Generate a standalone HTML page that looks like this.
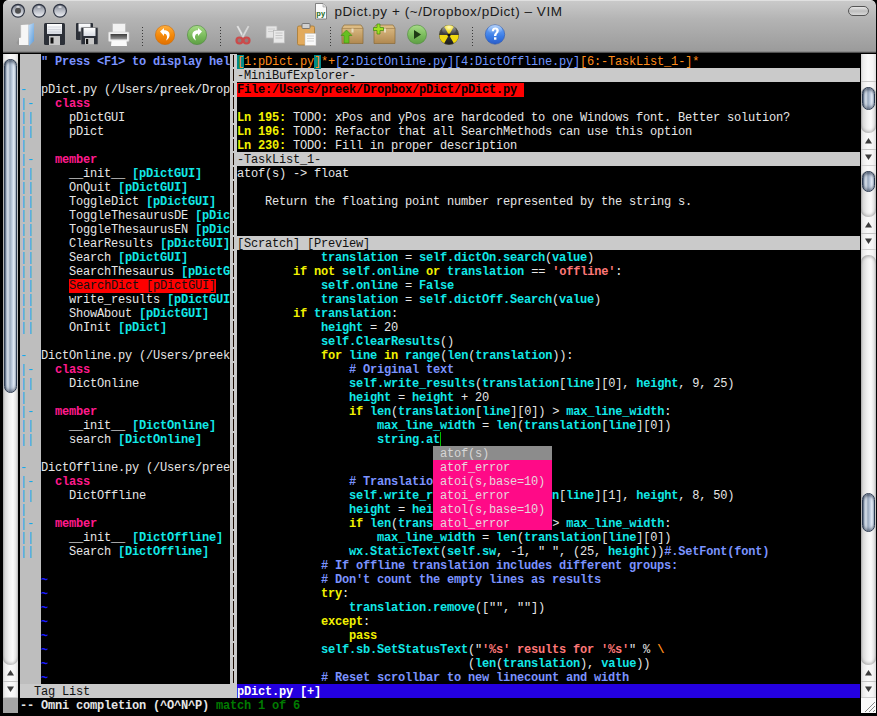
<!DOCTYPE html>
<html><head><meta charset="utf-8">
<style>
*{margin:0;padding:0;box-sizing:border-box}
html,body{width:877px;height:716px;overflow:hidden;background:#000}
#win{position:absolute;left:3px;top:0;width:873px;height:713px;background:#000;border-radius:5px 5px 0 0;overflow:hidden}
#tb{position:absolute;left:0;top:0;width:873px;height:53px;background:linear-gradient(#e0e0e0 0,#e0e0e0 1px,#c9c9c9 1.5px,#b3b3b3 20px,#9b9b9b 51px,#767676 52px,#2a2a2a 53px);border-radius:5px 5px 0 0}
.title{position:absolute;left:331.5px;top:4px;font:13.5px "Liberation Sans",sans-serif;color:#1a1a1a;white-space:pre;letter-spacing:0.55px}
.row{position:absolute;height:14px;line-height:14px;padding-top:1px;font-family:"Liberation Mono",monospace;font-size:12px;letter-spacing:-0.2px;white-space:pre;color:#e6e6e6}
.fold{color:#10a8f0}
.n{color:#e6e6e6}.cm{color:#7b93ff}.id{color:#12e8e8}.kw{color:#f2f200}.st{color:#ff7878}.pk{color:#ff1a8c}.tl{color:#1a1aff}.or{color:#ff8c1a}.bl{color:#7096ff}.gr{color:#007a00}
.sel{background:#ff0000;color:#101010}
.tab{background:#008b8b;color:#ff8c1a}
.file{background:#ff0000;color:#000;font-weight:bold}
.blk{position:absolute}
.stl{position:absolute;height:14px;background:#cacaca}
.sb{position:absolute;width:15px;background:linear-gradient(90deg,#b4b4b4 0,#dedede 1px,#f2f2f2 3px,#ffffff 7px,#f6f6f6 11px,#e2e2e2 14px,#c8c8c8 15px)}
.thumb{position:absolute;width:13px;border-radius:6.5px;border:1px solid #2e3c52;background:linear-gradient(90deg,#4e5e76 0,#a6b4c6 1px,#d8e0ea 3px,#98a8bc 5px,#bccade 7px,#e6eef8 9px,#b4c2d4 11px,#5a6a82 13px);box-shadow:inset 0 3px 3px -1px rgba(30,40,60,.6),inset 0 -3px 3px -1px rgba(30,40,60,.45)}
.arr{position:absolute;left:0;width:15px;height:16px}
.arr:after{content:"";position:absolute;left:3px;border-left:4.5px solid transparent;border-right:4.5px solid transparent}
.up:after{top:5px;border-bottom:6px solid #404040}
.dn:after{top:5px;border-top:6px solid #404040}
.cap{position:absolute;width:15px;border-radius:0 0 7.5px 7.5px;background:linear-gradient(90deg,#c0c0c0,#eeeeee 40%,#f4f4f4 60%,#cccccc);box-shadow:0 1px 1px rgba(0,0,0,.25)}
.capt{position:absolute;width:15px;border-radius:7.5px 7.5px 0 0;background:linear-gradient(90deg,#c0c0c0,#eeeeee 40%,#f4f4f4 60%,#cccccc);box-shadow:0 -1px 1px rgba(0,0,0,.2)}
</style></head><body>
<div id="win">
<div id="tb">
  <!-- traffic lights -->
  <svg width="80" height="22" style="position:absolute;left:5px;top:0">
    <defs>
      <linearGradient id="tl" x1="0" y1="0" x2="0" y2="1"><stop offset="0" stop-color="#6e7482"/><stop offset="0.35" stop-color="#a8acb6"/><stop offset="0.75" stop-color="#d6d9e0"/><stop offset="1" stop-color="#eceef2"/></linearGradient>
      <radialGradient id="hl" cx="50%" cy="50%" r="50%"><stop offset="0" stop-color="#ffffff" stop-opacity="1"/><stop offset="1" stop-color="#ffffff" stop-opacity="0"/></radialGradient>
    </defs>
    <g stroke="#2e3442" stroke-width="1.2">
    <circle cx="10" cy="10.8" r="6.4" fill="url(#tl)"/>
    <circle cx="31" cy="10.8" r="6.4" fill="url(#tl)"/>
    <circle cx="52" cy="10.8" r="6.4" fill="url(#tl)"/>
    </g>
    <ellipse cx="10" cy="7" rx="2.5" ry="1.6" fill="url(#hl)"/>
    <ellipse cx="31" cy="7" rx="2.5" ry="1.6" fill="url(#hl)"/>
    <ellipse cx="52" cy="7" rx="2.5" ry="1.6" fill="url(#hl)"/>
    <circle cx="10" cy="10.8" r="3" fill="#505050"/>
  </svg>
  <!-- title -->
  <svg width="16" height="18" style="position:absolute;left:309px;top:2px">
    <path d="M3.5 1.5 H11 L14.5 5 V17 H3.5 Z" fill="#fbfbfb" stroke="#777" stroke-width="0.9"/>
    <path d="M11 1.5 V5 H14.5" fill="#ddd" stroke="#999" stroke-width="0.6"/>
    <text x="4.3" y="14.2" font-family="Liberation Sans" font-weight="bold" font-size="7.5" fill="#1a6a1a">py</text>
  </svg>
  <div class="title">pDict.py + (~/Dropbox/pDict) – VIM</div>
  <div style="position:absolute;left:845px;top:6px;width:21px;height:10px;border-radius:5px;border:1px solid #555;background:linear-gradient(#e8e8e8,#bdbdbd 50%,#d8d8d8)"></div>
</div>
</div>
<svg width="877" height="53" style="position:absolute;left:0;top:0">
<defs>
<linearGradient id="gOr" x1="0" y1="0" x2="0" y2="1"><stop offset="0" stop-color="#ffb040"/><stop offset="0.5" stop-color="#f58a0a"/><stop offset="1" stop-color="#e07000"/></linearGradient>
<linearGradient id="gGr" x1="0" y1="0" x2="0" y2="1"><stop offset="0" stop-color="#a8dc88"/><stop offset="0.6" stop-color="#76b858"/><stop offset="1" stop-color="#5e9e44"/></linearGradient>
<linearGradient id="gBl" x1="0" y1="0" x2="0" y2="1"><stop offset="0" stop-color="#7ab0f8"/><stop offset="0.6" stop-color="#3a7ce6"/><stop offset="1" stop-color="#2a5cc8"/></linearGradient>
<linearGradient id="gBox" x1="0" y1="0" x2="0" y2="1"><stop offset="0" stop-color="#e0c088"/><stop offset="1" stop-color="#b08850"/></linearGradient>
<linearGradient id="gFl" x1="0" y1="0" x2="1" y2="1"><stop offset="0" stop-color="#c8e0f8"/><stop offset="1" stop-color="#5a9ad8"/></linearGradient>
<linearGradient id="gLbl" x1="0" y1="0" x2="0" y2="1"><stop offset="0" stop-color="#ffffff"/><stop offset="1" stop-color="#d8dce4"/></linearGradient>
</defs>
<!-- open -->
<path d="M21 25 L28.5 24.5 L28.5 45 L19 45 L19 38 L21 37.5 Z" fill="#f6f6f6"/><path d="M19 38 L16.5 43 L19 45 Z" fill="#8a8a8a" opacity="0.5"/>
<path d="M28.5 25 L34 23 L34 41 L29 46 Z" fill="url(#gFl)"/><path d="M21 25 L21 37.5" stroke="#e0e0e0" stroke-width="0.6"/>
<!-- save -->
<rect x="44" y="23" width="21" height="22" rx="1.5" fill="#2c3038"/>
<rect x="47" y="24" width="15" height="10" fill="url(#gLbl)"/><g stroke="#c4c8d0" stroke-width="0.6"><line x1="48" y1="27" x2="61" y2="27"/><line x1="48" y1="29.5" x2="61" y2="29.5"/><line x1="48" y1="32" x2="61" y2="32"/></g>
<rect x="49" y="36" width="11" height="9" fill="#c8c8c8"/>
<rect x="50.5" y="37.5" width="3" height="6" fill="#111"/>
<!-- save all -->
<rect x="76" y="23" width="17" height="17" rx="1" fill="#2c3038"/>
<rect x="78.5" y="23.5" width="12" height="8" fill="url(#gLbl)"/>
<rect x="81" y="27.5" width="17" height="17" rx="1" fill="#2c3038" stroke="#9a9a9a" stroke-width="0.6"/>
<rect x="83.5" y="28" width="12" height="8" fill="url(#gLbl)"/>
<rect x="85" y="38" width="9" height="6.5" fill="#c8c8c8"/>
<rect x="86" y="39" width="2.2" height="5" fill="#111"/>
<!-- print -->
<rect x="112.5" y="23.5" width="13" height="9" fill="#f2f2f2" stroke="#bbb" stroke-width="0.7"/>
<rect x="108.5" y="32" width="20.5" height="9.5" rx="1" fill="#f0f0f0" stroke="#ccc" stroke-width="0.6"/>
<defs><linearGradient id="gSl" x1="0" y1="0" x2="0" y2="1"><stop offset="0" stop-color="#3a3a3a"/><stop offset="1" stop-color="#9a9a9a"/></linearGradient></defs><rect x="110.5" y="34" width="16.5" height="5.5" fill="url(#gSl)"/>
<path d="M111.5 41 L126.5 41 L127 46 L111 46 Z" fill="#fafafa"/>
<!-- separators -->
<g fill="#3a3a3a"><rect x="142" y="27" width="1" height="1"/><rect x="142" y="30" width="1" height="1"/><rect x="142" y="33" width="1" height="1"/><rect x="142" y="36" width="1" height="1"/><rect x="142" y="39" width="1" height="1"/><rect x="142" y="42" width="1" height="1"/><rect x="142" y="45" width="1" height="1"/><rect x="220" y="27" width="1" height="1"/><rect x="220" y="30" width="1" height="1"/><rect x="220" y="33" width="1" height="1"/><rect x="220" y="36" width="1" height="1"/><rect x="220" y="39" width="1" height="1"/><rect x="220" y="42" width="1" height="1"/><rect x="220" y="45" width="1" height="1"/><rect x="330" y="27" width="1" height="1"/><rect x="330" y="30" width="1" height="1"/><rect x="330" y="33" width="1" height="1"/><rect x="330" y="36" width="1" height="1"/><rect x="330" y="39" width="1" height="1"/><rect x="330" y="42" width="1" height="1"/><rect x="330" y="45" width="1" height="1"/><rect x="472" y="27" width="1" height="1"/><rect x="472" y="30" width="1" height="1"/><rect x="472" y="33" width="1" height="1"/><rect x="472" y="36" width="1" height="1"/><rect x="472" y="39" width="1" height="1"/><rect x="472" y="42" width="1" height="1"/><rect x="472" y="45" width="1" height="1"/></g>
<!-- undo -->
<circle cx="165" cy="35" r="9.6" fill="url(#gOr)" stroke="#d06a00" stroke-width="0.6"/>
<path d="M160 31.5 L164 28 L164 30.3 C168.5 30.3 170 33 169.5 36 C169 38.5 167 40 166 40.5 C167 38.5 167.5 36.5 166.5 35 C165.8 34 165 33.8 164 33.8 L164 36 Z" fill="#fff"/>
<!-- redo -->
<circle cx="197" cy="35" r="9.6" fill="url(#gGr)" stroke="#4a8a38" stroke-width="0.6"/>
<path d="M202 31.5 L198 28 L198 30.3 C193.5 30.3 192 33 192.5 36 C193 38.5 195 40 196 40.5 C195 38.5 194.5 36.5 195.5 35 C196.2 34 197 33.8 198 33.8 L198 36 Z" fill="#fff"/>
<!-- cut -->
<path d="M236 26 L238.5 25.5 L244.5 36.5 L242.5 38 Z" fill="#e2e2e2" stroke="#a0a0a0" stroke-width="0.5"/>
<path d="M250 26 L247.5 25.5 L241.5 36.5 L243.5 38 Z" fill="#d6d6d6" stroke="#a0a0a0" stroke-width="0.5"/>
<circle cx="239.5" cy="40.5" r="3" fill="#7a2a2a" fill-opacity="0.35" stroke="#cc4a4a" stroke-width="2.2"/>
<circle cx="246.5" cy="40.5" r="3" fill="#7a2a2a" fill-opacity="0.35" stroke="#cc4a4a" stroke-width="2.2"/>
<!-- copy -->
<rect x="266" y="26" width="11" height="12" fill="#e4e4e4" stroke="#b8b8b8" stroke-width="0.8"/><g stroke="#c4c4c4" stroke-width="0.8"><line x1="268" y1="29" x2="275" y2="29"/><line x1="268" y1="31.5" x2="275" y2="31.5"/></g>
<rect x="273.5" y="30.5" width="11" height="12.5" fill="#e8e8e8" stroke="#b8b8b8" stroke-width="0.8"/>
<g stroke="#bdbdbd" stroke-width="0.8"><line x1="275.5" y1="33" x2="282.5" y2="33"/><line x1="275.5" y1="35.5" x2="282.5" y2="35.5"/><line x1="275.5" y1="38" x2="282.5" y2="38"/></g>
<!-- paste -->
<rect x="297.5" y="26" width="17" height="19" rx="1.5" fill="#e2aa5c" stroke="#a87830" stroke-width="0.8"/>
<rect x="302" y="23.5" width="8" height="5" rx="1" fill="#d0d0d0" stroke="#666" stroke-width="0.8"/>
<rect x="305" y="33.5" width="11" height="12" fill="#fafafa" stroke="#bbb" stroke-width="0.5"/>
<g stroke="#ccc" stroke-width="0.8"><line x1="307" y1="36" x2="314" y2="36"/><line x1="307" y1="38.5" x2="314" y2="38.5"/><line x1="307" y1="41" x2="314" y2="41"/></g>
<!-- load session box -->
<path d="M342 28 L344 25 L361 25 L363 28 L363 43.5 L342 43.5 Z" fill="url(#gBox)" stroke="#8a6a38" stroke-width="0.7"/>
<line x1="342" y1="28.5" x2="363" y2="28.5" stroke="#9a7a48" stroke-width="0.6"/>
<rect x="351.5" y="28.5" width="2" height="4" fill="#e8dcc0"/>
<path d="M346.5 30 L352 35.5 L349 35.5 L349 43 L344 43 L344 35.5 L341 35.5 Z" fill="#66c020" stroke="#3a8a10" stroke-width="0.6"/>
<!-- new session -->
<path d="M374 28 L376 25 L393 25 L395 28 L395 43.5 L374 43.5 Z" fill="url(#gBox)" stroke="#8a6a38" stroke-width="0.7"/>
<line x1="374" y1="28.5" x2="395" y2="28.5" stroke="#9a7a48" stroke-width="0.6"/>
<rect x="384" y="28.5" width="2" height="4" fill="#e8dcc0"/>
<path d="M377 24 L380 24 L380 27.5 L383.5 27.5 L383.5 30.5 L380 30.5 L380 34 L377 34 L377 30.5 L373.5 30.5 L373.5 27.5 L377 27.5 Z" fill="#a0e020" stroke="#3a8a10" stroke-width="0.7"/>
<!-- run -->
<circle cx="417" cy="34.5" r="9.5" fill="url(#gGr)" stroke="#4a8a38" stroke-width="0.6"/>
<path d="M414 30 L421 34.5 L414 39 Z" fill="#1e3a14"/>
<!-- radiation -->
<defs>
<radialGradient id="gRad" cx="50%" cy="20%" r="80%"><stop offset="0" stop-color="#fff8a0"/><stop offset="0.45" stop-color="#f2dc10"/><stop offset="1" stop-color="#e8c800"/></radialGradient>
<linearGradient id="gBlk" x1="0" y1="0" x2="0" y2="1"><stop offset="0" stop-color="#5a5a5a"/><stop offset="1" stop-color="#1a1a1a"/></linearGradient>
<linearGradient id="gGloss" x1="0" y1="0" x2="0" y2="1"><stop offset="0" stop-color="#fff" stop-opacity="0.45"/><stop offset="1" stop-color="#fff" stop-opacity="0"/></linearGradient>
</defs>
<circle cx="449" cy="35" r="9.6" fill="url(#gBlk)" stroke="#3a3a20" stroke-width="0.7"/>
<path d="M449 35 L444.2 26.7 A9.6 9.6 0 0 1 453.8 26.7 Z" fill="url(#gRad)"/>
<path d="M449 35 L458.6 35 A9.6 9.6 0 0 1 453.8 43.3 Z" fill="#f0d810"/>
<path d="M449 35 L444.2 43.3 A9.6 9.6 0 0 1 439.4 35 Z" fill="#f0d810"/>
<circle cx="449" cy="35" r="1.6" fill="#111"/>
<ellipse cx="449" cy="30" rx="7" ry="4.5" fill="url(#gGloss)"/>
<!-- help -->
<circle cx="495" cy="34.5" r="9.7" fill="url(#gBl)" stroke="#2a58b0" stroke-width="0.6"/>
<ellipse cx="495" cy="29.5" rx="7" ry="4.5" fill="url(#gGloss)"/>
<path d="M491.8 31.2 C491.8 28.6 493.5 27.6 495.3 27.6 C497.3 27.6 498.8 28.8 498.8 30.8 C498.8 33.2 496.3 33.6 496.3 36 L494 36 C494 32.8 496.4 32.4 496.4 30.9 C496.4 30 495.9 29.5 495.2 29.5 C494.4 29.5 494 30.1 494 31.2 Z" fill="#fff"/>
<rect x="494" y="37.3" width="2.4" height="2.4" fill="#fff"/>
</svg>

<div class="blk" style="left:20px;top:54px;width:21px;height:630px;background:#bebebe"></div>
<div class="blk" style="left:230px;top:54px;width:7px;height:630px;background:#cacaca"></div>
<div class="blk" style="left:233px;top:55px;width:1px;height:12px;background:#1a0a00"></div>
<div class="blk" style="left:233px;top:69px;width:1px;height:12px;background:#1a0a00"></div>
<div class="blk" style="left:233px;top:83px;width:1px;height:12px;background:#1a0a00"></div>
<div class="blk" style="left:233px;top:97px;width:1px;height:12px;background:#1a0a00"></div>
<div class="blk" style="left:233px;top:111px;width:1px;height:12px;background:#1a0a00"></div>
<div class="blk" style="left:233px;top:125px;width:1px;height:12px;background:#1a0a00"></div>
<div class="blk" style="left:233px;top:139px;width:1px;height:12px;background:#1a0a00"></div>
<div class="blk" style="left:233px;top:153px;width:1px;height:12px;background:#1a0a00"></div>
<div class="blk" style="left:233px;top:167px;width:1px;height:12px;background:#1a0a00"></div>
<div class="blk" style="left:233px;top:181px;width:1px;height:12px;background:#1a0a00"></div>
<div class="blk" style="left:233px;top:195px;width:1px;height:12px;background:#1a0a00"></div>
<div class="blk" style="left:233px;top:209px;width:1px;height:12px;background:#1a0a00"></div>
<div class="blk" style="left:233px;top:223px;width:1px;height:12px;background:#1a0a00"></div>
<div class="blk" style="left:233px;top:237px;width:1px;height:12px;background:#1a0a00"></div>
<div class="blk" style="left:233px;top:251px;width:1px;height:12px;background:#1a0a00"></div>
<div class="blk" style="left:233px;top:265px;width:1px;height:12px;background:#1a0a00"></div>
<div class="blk" style="left:233px;top:279px;width:1px;height:12px;background:#1a0a00"></div>
<div class="blk" style="left:233px;top:293px;width:1px;height:12px;background:#1a0a00"></div>
<div class="blk" style="left:233px;top:307px;width:1px;height:12px;background:#1a0a00"></div>
<div class="blk" style="left:233px;top:321px;width:1px;height:12px;background:#1a0a00"></div>
<div class="blk" style="left:233px;top:335px;width:1px;height:12px;background:#1a0a00"></div>
<div class="blk" style="left:233px;top:349px;width:1px;height:12px;background:#1a0a00"></div>
<div class="blk" style="left:233px;top:363px;width:1px;height:12px;background:#1a0a00"></div>
<div class="blk" style="left:233px;top:377px;width:1px;height:12px;background:#1a0a00"></div>
<div class="blk" style="left:233px;top:391px;width:1px;height:12px;background:#1a0a00"></div>
<div class="blk" style="left:233px;top:405px;width:1px;height:12px;background:#1a0a00"></div>
<div class="blk" style="left:233px;top:419px;width:1px;height:12px;background:#1a0a00"></div>
<div class="blk" style="left:233px;top:433px;width:1px;height:12px;background:#1a0a00"></div>
<div class="blk" style="left:233px;top:447px;width:1px;height:12px;background:#1a0a00"></div>
<div class="blk" style="left:233px;top:461px;width:1px;height:12px;background:#1a0a00"></div>
<div class="blk" style="left:233px;top:475px;width:1px;height:12px;background:#1a0a00"></div>
<div class="blk" style="left:233px;top:489px;width:1px;height:12px;background:#1a0a00"></div>
<div class="blk" style="left:233px;top:503px;width:1px;height:12px;background:#1a0a00"></div>
<div class="blk" style="left:233px;top:517px;width:1px;height:12px;background:#1a0a00"></div>
<div class="blk" style="left:233px;top:531px;width:1px;height:12px;background:#1a0a00"></div>
<div class="blk" style="left:233px;top:545px;width:1px;height:12px;background:#1a0a00"></div>
<div class="blk" style="left:233px;top:559px;width:1px;height:12px;background:#1a0a00"></div>
<div class="blk" style="left:233px;top:573px;width:1px;height:12px;background:#1a0a00"></div>
<div class="blk" style="left:233px;top:587px;width:1px;height:12px;background:#1a0a00"></div>
<div class="blk" style="left:233px;top:601px;width:1px;height:12px;background:#1a0a00"></div>
<div class="blk" style="left:233px;top:615px;width:1px;height:12px;background:#1a0a00"></div>
<div class="blk" style="left:233px;top:629px;width:1px;height:12px;background:#1a0a00"></div>
<div class="blk" style="left:233px;top:643px;width:1px;height:12px;background:#1a0a00"></div>
<div class="blk" style="left:233px;top:657px;width:1px;height:12px;background:#1a0a00"></div>
<div class="blk" style="left:233px;top:671px;width:1px;height:12px;background:#1a0a00"></div>
<div class="blk" style="left:20px;top:684px;width:217px;height:14px;background:#cacaca"></div>
<div class="blk" style="left:237px;top:68px;width:623px;height:14px;background:#cacaca"></div>
<div class="blk" style="left:237px;top:152px;width:623px;height:14px;background:#cacaca"></div>
<div class="blk" style="left:237px;top:236px;width:623px;height:14px;background:#cacaca"></div>
<div class="blk" style="left:237px;top:684px;width:623px;height:14px;background:#2400e0"></div>
<div class="blk" style="left:440px;top:432px;width:1px;height:14px;background:#00c000"></div>
<div class="blk" style="left:3px;top:54px;width:15px;height:644px;background:linear-gradient(90deg,#d0d0d0 0,#ececec 2px,#fafafa 7px,#f4f4f4 12px,#dcdcdc 15px)"></div>
<div class="blk" style="left:3px;top:59px;width:15px;height:606px;border-radius:7px;background:linear-gradient(90deg,#b8b8b8 0,#d8d8d8 2px,#efefef 6px,#fbfbfb 10px,#e4e4e4 13px,#c8c8c8 15px);box-shadow:inset 0 3px 3px -1px rgba(0,0,0,.25),inset 0 -3px 3px -1px rgba(0,0,0,.22)"></div>
<div class="blk" style="left:3px;top:681px;width:15px;height:1px;background:#c4c4c4"></div>
<div class="blk" style="left:3px;top:697px;width:15px;height:1px;background:#cfcfcf"></div>
<svg class="blk" style="left:3px;top:665px" width="15" height="33"><path d="M4 10.5 L11 10.5 L7.5 5 Z" fill="#3c3c3c"/><path d="M4 21.5 L11 21.5 L7.5 27 Z" fill="#3c3c3c"/></svg>
<div class="thumb" style="left:4px;top:59px;height:334px"></div>
<div class="blk" style="left:3px;top:698px;width:15px;height:15px;background:#a4a4a4"></div>
<div class="blk" style="left:861px;top:54px;width:15px;height:28px;background:linear-gradient(90deg,#d0d0d0 0,#ececec 2px,#fafafa 7px,#f4f4f4 12px,#dcdcdc 15px)"></div>
<div class="blk" style="left:861px;top:81px;width:15px;height:1px;background:#c8c8c8"></div>
<div class="blk" style="left:861px;top:82px;width:15px;height:84px;background:linear-gradient(90deg,#d0d0d0 0,#ececec 2px,#fafafa 7px,#f4f4f4 12px,#dcdcdc 15px)"></div>
<div class="blk" style="left:861px;top:87px;width:15px;height:46px;border-radius:7px;background:linear-gradient(90deg,#b8b8b8 0,#d8d8d8 2px,#efefef 6px,#fbfbfb 10px,#e4e4e4 13px,#c8c8c8 15px);box-shadow:inset 0 3px 3px -1px rgba(0,0,0,.25),inset 0 -3px 3px -1px rgba(0,0,0,.22)"></div>
<div class="blk" style="left:861px;top:149px;width:15px;height:1px;background:#c4c4c4"></div>
<div class="blk" style="left:861px;top:165px;width:15px;height:1px;background:#cfcfcf"></div>
<svg class="blk" style="left:861px;top:133px" width="15" height="33"><path d="M4 10.5 L11 10.5 L7.5 5 Z" fill="#3c3c3c"/><path d="M4 21.5 L11 21.5 L7.5 27 Z" fill="#3c3c3c"/></svg>
<div class="thumb" style="left:862px;top:87px;height:23px"></div>
<div class="blk" style="left:861px;top:166px;width:15px;height:84px;background:linear-gradient(90deg,#d0d0d0 0,#ececec 2px,#fafafa 7px,#f4f4f4 12px,#dcdcdc 15px)"></div>
<div class="blk" style="left:861px;top:171px;width:15px;height:46px;border-radius:7px;background:linear-gradient(90deg,#b8b8b8 0,#d8d8d8 2px,#efefef 6px,#fbfbfb 10px,#e4e4e4 13px,#c8c8c8 15px);box-shadow:inset 0 3px 3px -1px rgba(0,0,0,.25),inset 0 -3px 3px -1px rgba(0,0,0,.22)"></div>
<div class="blk" style="left:861px;top:233px;width:15px;height:1px;background:#c4c4c4"></div>
<div class="blk" style="left:861px;top:249px;width:15px;height:1px;background:#cfcfcf"></div>
<svg class="blk" style="left:861px;top:217px" width="15" height="33"><path d="M4 10.5 L11 10.5 L7.5 5 Z" fill="#3c3c3c"/><path d="M4 21.5 L11 21.5 L7.5 27 Z" fill="#3c3c3c"/></svg>
<div class="thumb" style="left:862px;top:171px;height:21px"></div>
<div class="blk" style="left:861px;top:250px;width:15px;height:448px;background:linear-gradient(90deg,#d0d0d0 0,#ececec 2px,#fafafa 7px,#f4f4f4 12px,#dcdcdc 15px)"></div>
<div class="blk" style="left:861px;top:255px;width:15px;height:410px;border-radius:7px;background:linear-gradient(90deg,#b8b8b8 0,#d8d8d8 2px,#efefef 6px,#fbfbfb 10px,#e4e4e4 13px,#c8c8c8 15px);box-shadow:inset 0 3px 3px -1px rgba(0,0,0,.25),inset 0 -3px 3px -1px rgba(0,0,0,.22)"></div>
<div class="blk" style="left:861px;top:681px;width:15px;height:1px;background:#c4c4c4"></div>
<div class="blk" style="left:861px;top:697px;width:15px;height:1px;background:#cfcfcf"></div>
<svg class="blk" style="left:861px;top:665px" width="15" height="33"><path d="M4 10.5 L11 10.5 L7.5 5 Z" fill="#3c3c3c"/><path d="M4 21.5 L11 21.5 L7.5 27 Z" fill="#3c3c3c"/></svg>
<div class="thumb" style="left:862px;top:493px;height:39px"></div>
<div class="blk" style="left:861px;top:698px;width:15px;height:15px;background:#fafafa"></div>
<svg class="blk" style="left:861px;top:698px" width="15" height="15"><g stroke="#8a8a8a" stroke-width="1"><line x1="4" y1="14" x2="14" y2="4"/><line x1="8" y1="14" x2="14" y2="8"/><line x1="12" y1="14" x2="14" y2="12"/></g></svg>
<div class="row" style="top:54px;left:41px"><span class="cm" style="font-weight:bold">&quot; Press &lt;F1&gt; to display hel</span></div>
<div class="row" style="top:82px;left:41px"><span class="n">pDict.py (/Users/preek/Drop</span></div>
<div class="row" style="top:96px;left:41px"><span class="n">  </span><span class="pk" style="font-weight:bold">class</span></div>
<div class="row" style="top:110px;left:41px"><span class="n">    pDictGUI</span></div>
<div class="row" style="top:124px;left:41px"><span class="n">    pDict</span></div>
<div class="row" style="top:152px;left:41px"><span class="n">  </span><span class="pk" style="font-weight:bold">member</span></div>
<div class="row" style="top:166px;left:41px"><span class="n">    __init__ </span><span class="id" style="font-weight:bold">[pDictGUI]</span></div>
<div class="row" style="top:180px;left:41px"><span class="n">    OnQuit </span><span class="id" style="font-weight:bold">[pDictGUI]</span></div>
<div class="row" style="top:194px;left:41px"><span class="n">    ToggleDict </span><span class="id" style="font-weight:bold">[pDictGUI]</span></div>
<div class="row" style="top:208px;left:41px"><span class="n">    ToggleThesaurusDE </span><span class="id" style="font-weight:bold">[pDic</span></div>
<div class="row" style="top:222px;left:41px"><span class="n">    ToggleThesaurusEN </span><span class="id" style="font-weight:bold">[pDic</span></div>
<div class="row" style="top:236px;left:41px"><span class="n">    ClearResults </span><span class="id" style="font-weight:bold">[pDictGUI]</span></div>
<div class="row" style="top:250px;left:41px"><span class="n">    Search </span><span class="id" style="font-weight:bold">[pDictGUI]</span></div>
<div class="row" style="top:264px;left:41px"><span class="n">    SearchThesaurus </span><span class="id" style="font-weight:bold">[pDictG</span></div>
<div class="row" style="top:278px;left:41px"><span class="n">    </span><span class="sel">SearchDict [pDictGUI]</span></div>
<div class="row" style="top:292px;left:41px"><span class="n">    write_results </span><span class="id" style="font-weight:bold">[pDictGUI</span></div>
<div class="row" style="top:306px;left:41px"><span class="n">    ShowAbout </span><span class="id" style="font-weight:bold">[pDictGUI]</span></div>
<div class="row" style="top:320px;left:41px"><span class="n">    OnInit </span><span class="id" style="font-weight:bold">[pDict]</span></div>
<div class="row" style="top:348px;left:41px"><span class="n">DictOnline.py (/Users/preek</span></div>
<div class="row" style="top:362px;left:41px"><span class="n">  </span><span class="pk" style="font-weight:bold">class</span></div>
<div class="row" style="top:376px;left:41px"><span class="n">    DictOnline</span></div>
<div class="row" style="top:404px;left:41px"><span class="n">  </span><span class="pk" style="font-weight:bold">member</span></div>
<div class="row" style="top:418px;left:41px"><span class="n">    __init__ </span><span class="id" style="font-weight:bold">[DictOnline]</span></div>
<div class="row" style="top:432px;left:41px"><span class="n">    search </span><span class="id" style="font-weight:bold">[DictOnline]</span></div>
<div class="row" style="top:460px;left:41px"><span class="n">DictOffline.py (/Users/pree</span></div>
<div class="row" style="top:474px;left:41px"><span class="n">  </span><span class="pk" style="font-weight:bold">class</span></div>
<div class="row" style="top:488px;left:41px"><span class="n">    DictOffline</span></div>
<div class="row" style="top:516px;left:41px"><span class="n">  </span><span class="pk" style="font-weight:bold">member</span></div>
<div class="row" style="top:530px;left:41px"><span class="n">    __init__ </span><span class="id" style="font-weight:bold">[DictOffline]</span></div>
<div class="row" style="top:544px;left:41px"><span class="n">    Search </span><span class="id" style="font-weight:bold">[DictOffline]</span></div>
<div class="row" style="top:572px;left:41px"><span class="tl" style="font-weight:bold;position:relative;top:1px">~</span></div>
<div class="row" style="top:586px;left:41px"><span class="tl" style="font-weight:bold;position:relative;top:1px">~</span></div>
<div class="row" style="top:600px;left:41px"><span class="tl" style="font-weight:bold;position:relative;top:1px">~</span></div>
<div class="row" style="top:614px;left:41px"><span class="tl" style="font-weight:bold;position:relative;top:1px">~</span></div>
<div class="row" style="top:628px;left:41px"><span class="tl" style="font-weight:bold;position:relative;top:1px">~</span></div>
<div class="row" style="top:642px;left:41px"><span class="tl" style="font-weight:bold;position:relative;top:1px">~</span></div>
<div class="row" style="top:656px;left:41px"><span class="tl" style="font-weight:bold;position:relative;top:1px">~</span></div>
<div class="row" style="top:670px;left:41px"><span class="tl" style="font-weight:bold;position:relative;top:1px">~</span></div>
<div class="row" style="top:54px;left:237px"><span class="tab">[</span><span class="or">1:pDict.py</span><span class="tab">]</span><span class="or">*+</span><span class="bl">[2:DictOnline.py][4:DictOffline.py]</span><span class="or">[6:-TaskList_1-]*</span></div>
<div class="row" style="top:82px;left:237px"><span class="file">File:/Users/preek/Dropbox/pDict/pDict.py </span></div>
<div class="row" style="top:110px;left:237px"><span class="kw" style="font-weight:bold">Ln 195:</span><span class="n"> TODO: xPos and yPos are hardcoded to one Windows font. Better solution?</span></div>
<div class="row" style="top:124px;left:237px"><span class="kw" style="font-weight:bold">Ln 196:</span><span class="n"> TODO: Refactor that all SearchMethods can use this option</span></div>
<div class="row" style="top:138px;left:237px"><span class="kw" style="font-weight:bold">Ln 230:</span><span class="n"> TODO: Fill in proper description</span></div>
<div class="row" style="top:166px;left:237px"><span class="n">atof(s) -&gt; float</span></div>
<div class="row" style="top:194px;left:237px"><span class="n">    Return the floating point number represented by the string s.</span></div>
<div class="row" style="top:250px;left:237px"><span class="n">            </span><span class="id" style="font-weight:bold">translation</span><span class="n"> = </span><span class="id" style="font-weight:bold">self.dictOn.search</span><span class="n">(</span><span class="id" style="font-weight:bold">value</span><span class="n">)</span></div>
<div class="row" style="top:264px;left:237px"><span class="n">        </span><span class="kw" style="font-weight:bold">if not</span><span class="n"> </span><span class="id" style="font-weight:bold">self.online</span><span class="n"> </span><span class="kw" style="font-weight:bold">or</span><span class="n"> </span><span class="id" style="font-weight:bold">translation</span><span class="n"> == </span><span class="st" style="font-weight:bold">&#x27;offline&#x27;</span><span class="n">:</span></div>
<div class="row" style="top:278px;left:237px"><span class="n">            </span><span class="id" style="font-weight:bold">self.online</span><span class="n"> = </span><span class="id" style="font-weight:bold">False</span></div>
<div class="row" style="top:292px;left:237px"><span class="n">            </span><span class="id" style="font-weight:bold">translation</span><span class="n"> = </span><span class="id" style="font-weight:bold">self.dictOff.Search</span><span class="n">(</span><span class="id" style="font-weight:bold">value</span><span class="n">)</span></div>
<div class="row" style="top:306px;left:237px"><span class="n">        </span><span class="kw" style="font-weight:bold">if</span><span class="n"> </span><span class="id" style="font-weight:bold">translation</span><span class="n">:</span></div>
<div class="row" style="top:320px;left:237px"><span class="n">            </span><span class="id" style="font-weight:bold">height</span><span class="n"> = </span><span class="n">20</span></div>
<div class="row" style="top:334px;left:237px"><span class="n">            </span><span class="id" style="font-weight:bold">self.ClearResults</span><span class="n">()</span></div>
<div class="row" style="top:348px;left:237px"><span class="n">            </span><span class="kw" style="font-weight:bold">for</span><span class="n"> </span><span class="id" style="font-weight:bold">line</span><span class="n"> </span><span class="kw" style="font-weight:bold">in</span><span class="n"> </span><span class="id" style="font-weight:bold">range</span><span class="n">(</span><span class="id" style="font-weight:bold">len</span><span class="n">(</span><span class="id" style="font-weight:bold">translation</span><span class="n">)):</span></div>
<div class="row" style="top:362px;left:237px"><span class="n">                </span><span class="cm" style="font-weight:bold"># Original text</span></div>
<div class="row" style="top:376px;left:237px"><span class="n">                </span><span class="id" style="font-weight:bold">self.write_results</span><span class="n">(</span><span class="id" style="font-weight:bold">translation</span><span class="n">[</span><span class="id" style="font-weight:bold">line</span><span class="n">][</span><span class="n">0</span><span class="n">], </span><span class="id" style="font-weight:bold">height</span><span class="n">, 9, 25)</span></div>
<div class="row" style="top:390px;left:237px"><span class="n">                </span><span class="id" style="font-weight:bold">height</span><span class="n"> = </span><span class="id" style="font-weight:bold">height</span><span class="n"> + 20</span></div>
<div class="row" style="top:404px;left:237px"><span class="n">                </span><span class="kw" style="font-weight:bold">if</span><span class="n"> </span><span class="id" style="font-weight:bold">len</span><span class="n">(</span><span class="id" style="font-weight:bold">translation</span><span class="n">[</span><span class="id" style="font-weight:bold">line</span><span class="n">][0]) &gt; </span><span class="id" style="font-weight:bold">max_line_width</span><span class="n">:</span></div>
<div class="row" style="top:418px;left:237px"><span class="n">                    </span><span class="id" style="font-weight:bold">max_line_width</span><span class="n"> = </span><span class="id" style="font-weight:bold">len</span><span class="n">(</span><span class="id" style="font-weight:bold">translation</span><span class="n">[</span><span class="id" style="font-weight:bold">line</span><span class="n">][0])</span></div>
<div class="row" style="top:432px;left:237px"><span class="n">                    </span><span class="id" style="font-weight:bold">string.at</span></div>
<div class="row" style="top:474px;left:237px"><span class="n">                </span><span class="cm" style="font-weight:bold"># Translation</span></div>
<div class="row" style="top:488px;left:237px"><span class="n">                </span><span class="id" style="font-weight:bold">self.write_results</span><span class="n">(</span><span class="id" style="font-weight:bold">translation</span><span class="n">[</span><span class="id" style="font-weight:bold">line</span><span class="n">][</span><span class="n">1</span><span class="n">], </span><span class="id" style="font-weight:bold">height</span><span class="n">, 8, 50)</span></div>
<div class="row" style="top:502px;left:237px"><span class="n">                </span><span class="id" style="font-weight:bold">height</span><span class="n"> = </span><span class="id" style="font-weight:bold">height</span><span class="n"> + 20</span></div>
<div class="row" style="top:516px;left:237px"><span class="n">                </span><span class="kw" style="font-weight:bold">if</span><span class="n"> </span><span class="id" style="font-weight:bold">len</span><span class="n">(</span><span class="id" style="font-weight:bold">translation</span><span class="n">[</span><span class="id" style="font-weight:bold">line</span><span class="n">][0]) &gt; </span><span class="id" style="font-weight:bold">max_line_width</span><span class="n">:</span></div>
<div class="row" style="top:530px;left:237px"><span class="n">                    </span><span class="id" style="font-weight:bold">max_line_width</span><span class="n"> = </span><span class="id" style="font-weight:bold">len</span><span class="n">(</span><span class="id" style="font-weight:bold">translation</span><span class="n">[</span><span class="id" style="font-weight:bold">line</span><span class="n">][0])</span></div>
<div class="row" style="top:544px;left:237px"><span class="n">                </span><span class="id" style="font-weight:bold">wx.StaticText</span><span class="n">(</span><span class="id" style="font-weight:bold">self.sw</span><span class="n">, -1, &quot; &quot;, (25, </span><span class="id" style="font-weight:bold">height</span><span class="n">))</span><span class="cm" style="font-weight:bold">#.SetFont(font)</span></div>
<div class="row" style="top:558px;left:237px"><span class="n">            </span><span class="cm" style="font-weight:bold"># If offline translation includes different groups:</span></div>
<div class="row" style="top:572px;left:237px"><span class="n">            </span><span class="cm" style="font-weight:bold"># Don&#x27;t count the empty lines as results</span></div>
<div class="row" style="top:586px;left:237px"><span class="n">            </span><span class="kw" style="font-weight:bold">try</span><span class="n">:</span></div>
<div class="row" style="top:600px;left:237px"><span class="n">                </span><span class="id" style="font-weight:bold">translation.remove</span><span class="n">([&quot;&quot;, &quot;&quot;])</span></div>
<div class="row" style="top:614px;left:237px"><span class="n">            </span><span class="kw" style="font-weight:bold">except</span><span class="n">:</span></div>
<div class="row" style="top:628px;left:237px"><span class="n">                </span><span class="kw" style="font-weight:bold">pass</span></div>
<div class="row" style="top:642px;left:237px"><span class="n">            </span><span class="id" style="font-weight:bold">self.sb.SetStatusText</span><span class="n">(&quot;</span><span class="st" style="font-weight:bold">&#x27;%s&#x27;</span><span class="st" style="font-weight:bold"> results for </span><span class="st" style="font-weight:bold">&#x27;%s&#x27;</span><span class="n">&quot; % </span><span class="or" style="font-weight:bold">\</span></div>
<div class="row" style="top:656px;left:237px"><span class="n">                                 </span><span class="n">(</span><span class="id" style="font-weight:bold">len</span><span class="n">(</span><span class="id" style="font-weight:bold">translation</span><span class="n">), </span><span class="id" style="font-weight:bold">value</span><span class="n">))</span></div>
<div class="row" style="top:670px;left:237px"><span class="n">            </span><span class="cm" style="font-weight:bold"># Reset scrollbar to new linecount and width</span></div>
<div class="row" style="top:698px;left:20px"><span class="n" style="font-weight:bold">-- Omni completion (^O^N^P) </span><span class="gr" style="font-weight:bold">match 1 of 6</span></div>
<div class="row" style="top:684px;left:34px"><span class="x" style="color:#101010;">Tag List</span></div>
<div class="row" style="top:68px;left:237px"><span class="x" style="color:#101010;">-MiniBufExplorer-</span></div>
<div class="row" style="top:152px;left:237px"><span class="x" style="color:#101010;">-TaskList_1-</span></div>
<div class="row" style="top:236px;left:237px"><span class="x" style="color:#101010;">[Scratch] [Preview]</span></div>
<div class="row" style="top:684px;left:237px"><span class="x" style="color:#ffffff;font-weight:bold">pDict.py [+]</span></div>
<div class="row fold" style="top:82px;left:20px">-</div>
<div class="row fold" style="top:96px;left:20px">|-</div>
<div class="row fold" style="top:110px;left:20px">||</div>
<div class="row fold" style="top:124px;left:20px">||</div>
<div class="row fold" style="top:138px;left:20px">|</div>
<div class="row fold" style="top:152px;left:20px">|-</div>
<div class="row fold" style="top:166px;left:20px">||</div>
<div class="row fold" style="top:180px;left:20px">||</div>
<div class="row fold" style="top:194px;left:20px">||</div>
<div class="row fold" style="top:208px;left:20px">||</div>
<div class="row fold" style="top:222px;left:20px">||</div>
<div class="row fold" style="top:236px;left:20px">||</div>
<div class="row fold" style="top:250px;left:20px">||</div>
<div class="row fold" style="top:264px;left:20px">||</div>
<div class="row fold" style="top:278px;left:20px">||</div>
<div class="row fold" style="top:292px;left:20px">||</div>
<div class="row fold" style="top:306px;left:20px">||</div>
<div class="row fold" style="top:320px;left:20px">||</div>
<div class="row fold" style="top:348px;left:20px">-</div>
<div class="row fold" style="top:362px;left:20px">|-</div>
<div class="row fold" style="top:376px;left:20px">||</div>
<div class="row fold" style="top:390px;left:20px">|</div>
<div class="row fold" style="top:404px;left:20px">|-</div>
<div class="row fold" style="top:418px;left:20px">||</div>
<div class="row fold" style="top:432px;left:20px">||</div>
<div class="row fold" style="top:460px;left:20px">-</div>
<div class="row fold" style="top:474px;left:20px">|-</div>
<div class="row fold" style="top:488px;left:20px">||</div>
<div class="row fold" style="top:502px;left:20px">|</div>
<div class="row fold" style="top:516px;left:20px">|-</div>
<div class="row fold" style="top:530px;left:20px">||</div>
<div class="row fold" style="top:544px;left:20px">||</div>
<div class="blk" style="left:433px;top:446px;width:119px;height:14px;background:#8c8c8c"></div>
<div class="row" style="top:446px;left:440px"><span class="x" style="color:#d6d6d6">atof(s)</span></div>
<div class="blk" style="left:433px;top:460px;width:119px;height:14px;background:#ff0a87"></div>
<div class="row" style="top:460px;left:440px"><span class="x" style="color:#e8d6dc">atof_error</span></div>
<div class="blk" style="left:433px;top:474px;width:119px;height:14px;background:#ff0a87"></div>
<div class="row" style="top:474px;left:440px"><span class="x" style="color:#e8d6dc">atoi(s,base=10)</span></div>
<div class="blk" style="left:433px;top:488px;width:119px;height:14px;background:#ff0a87"></div>
<div class="row" style="top:488px;left:440px"><span class="x" style="color:#e8d6dc">atoi_error</span></div>
<div class="blk" style="left:433px;top:502px;width:119px;height:14px;background:#ff0a87"></div>
<div class="row" style="top:502px;left:440px"><span class="x" style="color:#e8d6dc">atol(s,base=10)</span></div>
<div class="blk" style="left:433px;top:516px;width:119px;height:14px;background:#ff0a87"></div>
<div class="row" style="top:516px;left:440px"><span class="x" style="color:#e8d6dc">atol_error</span></div>
</body></html>
